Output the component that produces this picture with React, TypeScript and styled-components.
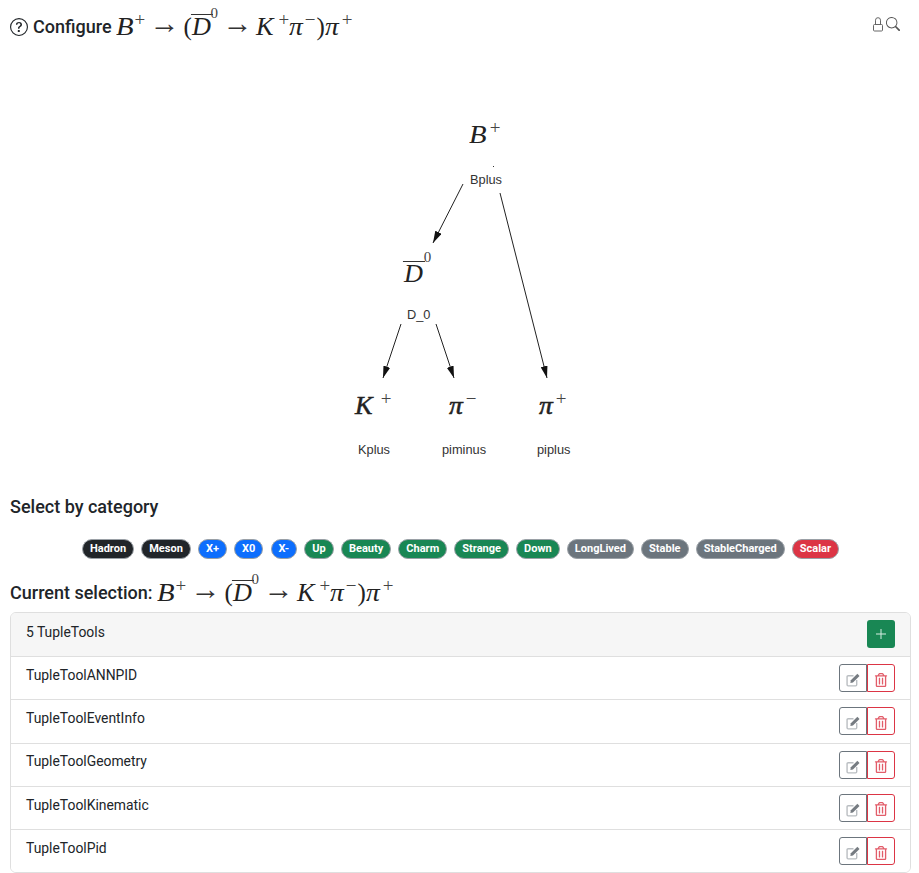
import React from 'react';
import styled, {createGlobalStyle} from 'styled-components';
import {BsQuestionCircle, BsSearch} from 'react-icons/bs';
import {FaRegTrashAlt} from 'react-icons/fa';

const GlobalStyle = createGlobalStyle`
	html, body {
		margin: 0;
		height: 873px;
		overflow: hidden;
		background: #fff;
		font-family: Roboto, "Liberation Sans", sans-serif;
		color: #212529;
	}
`;

const Page = styled.div`
	padding: 0 8px 0 10px;
`;

const TitleRow = styled.div`
	display: flex;
	justify-content: space-between;
	height: 50px;
	padding-right: 11px;
`;

const Heading = styled.h2`
	display: flex;
	align-items: center;
	gap: 6px;
	margin: 0;
	font-size: 18px;
	font-weight: 500;
	line-height: 24px;
	height: 24px;
`;

const TitleHeading = styled(Heading)`
	margin-top: 15px;
	svg {
		flex: none;
		margin-right: -1px;
	}
`;

const TopIcons = styled.div`
	display: flex;
	gap: 3px;
	padding-top: 17px;
	color: #555;
	align-items: flex-start;
`;

const MathText = styled.span`
	display: inline-flex;
	align-items: baseline;
	margin-left: -2px;
	font-family: "Liberation Serif", serif;
	font-size: 25px;
	font-weight: 400;
	line-height: 24px;
	color: #222;
`;

const Letter = styled.i<{$w: number; $sx?: number; $heavy?: boolean}>`
	display: inline-block;
	width: ${p => p.$w}px;
	transform: scaleX(${p => p.$sx ?? 1});
	transform-origin: left center;
	-webkit-text-stroke: ${p => (p.$heavy ? '0.5px #222' : '0')};
`;

const Overlined = styled(Letter)`
	position: relative;
	&::before {
		content: '';
		position: absolute;
		left: -1px;
		right: -1px;
		top: -1px;
		height: 1px;
		background: #333;
	}
`;

const Sup = styled.span<{$w: number}>`
	display: inline-block;
	width: ${p => p.$w}px;
	font-size: 19px;
	font-style: normal;
	font-weight: 300;
	text-align: center;
	position: relative;
	top: -9px;
	line-height: 0;
	color: #444;
`;

const Zero = styled(Sup)`
	font-size: 15px;
	top: -17px;
`;

const TreeZero = styled(Zero)`
	top: -20px;
`;

const Arrow = styled.span`
	display: inline-block;
	margin: 0 8px 0 9px;
	width: 21px;
	font-size: 30px;
	line-height: 0;
	color: #333;
	position: relative;
	top: -2px;
	left: -4px;
`;

const Paren = styled.span<{$gap?: number}>`
	display: inline-block;
	width: 8px;
	margin-left: ${p => p.$gap ?? 0}px;
`;

const Canvas = styled.div`
	position: relative;
	height: 435px;
	margin-left: -10px;
`;

const Edges = styled.svg`
	position: absolute;
	left: 0;
	top: 0;
`;

const Node = styled.div<{$x: number; $y: number}>`
	position: absolute;
	left: ${p => p.$x}px;
	top: ${p => p.$y}px;
`;

const NodeLabel = styled(Node)`
	font-family: "Liberation Sans", sans-serif;
	font-size: 12.8px;
	line-height: 16px;
	color: #333;
`;

const SectionHeading = styled(Heading)`
	margin-top: 10px;
`;

const BadgeRow = styled.div`
	display: flex;
	justify-content: center;
	gap: 7.15px;
	margin: 20px 0 22px;
`;

const Badge = styled.span<{$bg: string}>`
	display: inline-block;
	height: 20px;
	box-sizing: border-box;
	padding: 0 7px;
	border: 1px solid #9aa0a6;
	border-radius: 10px;
	background: ${p => p.$bg};
	color: #fff;
	font-size: 11px;
	font-weight: 700;
	line-height: 18px;
	white-space: nowrap;
`;

const List = styled.div`
	margin-top: 7px;
	border: 1px solid #dfdfdf;
	border-radius: 6px;
	overflow: hidden;
`;

const HeaderRow = styled.div`
	display: flex;
	justify-content: space-between;
	box-sizing: border-box;
	height: 43px;
	padding: 7px 15px;
	background: #f6f6f6;
	font-size: 13.9px;
	line-height: 21px;
`;

const HeaderText = styled.span`
	margin-top: 1.5px;
`;

const RowText = styled.span`
	margin-top: 0.7px;
`;

const Row = styled(HeaderRow)`
	height: 43.3px;
	background: #fff;
	border-top: 1px solid #dfdfdf;
`;

const Actions = styled.div`
	display: flex;
`;

const IconButton = styled.button<{$color: string; $side: 'left' | 'right'}>`
	display: flex;
	align-items: center;
	justify-content: center;
	width: 28px;
	height: 28px;
	padding: 3px 0 0;
	background: #fff;
	border: 1px solid ${p => p.$color};
	border-radius: ${p => (p.$side === 'left' ? '3px 0 0 3px' : '0 3px 3px 0')};
	color: ${p => p.$color};
	svg {
		opacity: 0.8;
	}
`;

const AddButton = styled.button`
	display: flex;
	align-items: center;
	justify-content: center;
	width: 28px;
	height: 28px;
	padding: 0;
	border: 0;
	border-radius: 3px;
	background: #198754;
`;

const Lock = () => (
	<svg width="10" height="15" viewBox="0 0 10 15" fill="none" stroke="#666" strokeWidth="1">
		<path d="M2.5 7.5V3.2a2.5 2.5 0 0 1 5 0V7.5" />
		<rect x="0.5" y="7.5" width="9" height="6.5" rx="1" />
	</svg>
);

const EditIcon = () => (
	<svg width="15" height="15" viewBox="0 0 14 14" fill="none">
		<path d="M10 7.5V12a1 1 0 0 1-1 1H2a1 1 0 0 1-1-1V4.5a1 1 0 0 1 1-1h5" stroke="#a9aeb3" strokeWidth="1.3" />
		<path d="M4.5 7.8L10.6 1.7l2 2L6.5 9.8l-2.4.4z" fill="#555c63" />
	</svg>
);

const Decay = () => (
	<MathText>
		<Letter $w={19} $sx={1.15}>B</Letter>
		<Sup $w={10}>+</Sup>
		<Arrow>→</Arrow>
		<Paren $gap={1}>(</Paren>
		<Overlined $w={19} $sx={1.05}>D</Overlined>
		<Zero $w={7}>0</Zero>
		<Arrow>→</Arrow>
		<Letter $w={23} $sx={1.05}>K</Letter>
		<Sup $w={10}>+</Sup>
		<Letter $w={15} $sx={1.1}>π</Letter>
		<Sup $w={13}>−</Sup>
		<Paren>)</Paren>
		<Letter $w={17} $sx={1.1}>π</Letter>
		<Sup $w={11}>+</Sup>
	</MathText>
);

const edges = [
	[463, 184, 433, 243],
	[500, 193, 547, 378],
	[401, 324, 383, 378],
	[436, 324, 454, 378],
];

const badges: [string, string][] = [
	['Hadron', '#212529'],
	['Meson', '#212529'],
	['X+', '#0d6efd'],
	['X0', '#0d6efd'],
	['X-', '#0d6efd'],
	['Up', '#198754'],
	['Beauty', '#198754'],
	['Charm', '#198754'],
	['Strange', '#198754'],
	['Down', '#198754'],
	['LongLived', '#6c757d'],
	['Stable', '#6c757d'],
	['StableCharged', '#6c757d'],
	['Scalar', '#dc3545'],
];

const tools = [
	'TupleToolANNPID',
	'TupleToolEventInfo',
	'TupleToolGeometry',
	'TupleToolKinematic',
	'TupleToolPid',
];

const App = () => (
	<Page>
		<GlobalStyle />
		<TitleRow>
			<TitleHeading>
				<BsQuestionCircle size={18} />
				<span>Configure</span>
				<Decay />
			</TitleHeading>
			<TopIcons>
				<Lock />
				<BsSearch size={14} />
			</TopIcons>
		</TitleRow>
		<Canvas>
			<Edges width="919" height="435" viewBox="0 50 919 435">
				<defs>
					<marker id="head" markerWidth="12" markerHeight="7" refX="12" refY="3.5" orient="auto" markerUnits="userSpaceOnUse">
						<path d="M0 0L12 3.5L0 7z" fill="#111" />
					</marker>
				</defs>
				{edges.map(([x1, y1, x2, y2]) => (
					<line key={`${x1}-${y1}-${x2}`} x1={x1} y1={y1} x2={x2} y2={y2} stroke="#222" strokeWidth="1" markerEnd="url(#head)" />
				))}
				<rect x="493" y="166" width="1" height="1" fill="#333" />
			</Edges>
			<Node $x={471} $y={73}>
				<MathText>
					<Letter $w={20} $sx={1.15}>B</Letter>
					<Sup $w={12}>+</Sup>
				</MathText>
			</Node>
			<NodeLabel $x={470} $y={122}>Bplus</NodeLabel>
			<Node $x={406} $y={212}>
				<MathText>
					<Overlined $w={19} $sx={1.05}>D</Overlined>
					<TreeZero $w={9}>0</TreeZero>
				</MathText>
			</Node>
			<NodeLabel $x={407} $y={257}>D_0</NodeLabel>
			<Node $x={357} $y={344}>
				<MathText>
					<Letter $w={25} $sx={1.05} $heavy>K</Letter>
					<Sup $w={12}>+</Sup>
				</MathText>
			</Node>
			<NodeLabel $x={358} $y={392}>Kplus</NodeLabel>
			<Node $x={451} $y={344}>
				<MathText>
					<Letter $w={16} $sx={1.1} $heavy>π</Letter>
					<Sup $w={12}>−</Sup>
				</MathText>
			</Node>
			<NodeLabel $x={442} $y={392}>piminus</NodeLabel>
			<Node $x={541} $y={344}>
				<MathText>
					<Letter $w={16} $sx={1.1} $heavy>π</Letter>
					<Sup $w={12}>+</Sup>
				</MathText>
			</Node>
			<NodeLabel $x={537} $y={392}>piplus</NodeLabel>
		</Canvas>
		<SectionHeading>Select by category</SectionHeading>
		<BadgeRow>
			{badges.map(([name, bg]) => (
				<Badge key={name} $bg={bg}>{name}</Badge>
			))}
		</BadgeRow>
		<Heading>
			<span>Current selection:</span>
			<Decay />
		</Heading>
		<List>
			<HeaderRow>
				<HeaderText>5 TupleTools</HeaderText>
				<AddButton>
					<svg width="12" height="12" viewBox="0 0 12 12" stroke="#d8eee2" strokeWidth="1">
						<path d="M6 1v10M1 6h10" />
					</svg>
				</AddButton>
			</HeaderRow>
			{tools.map(tool => (
				<Row key={tool}>
					<RowText>{tool}</RowText>
					<Actions>
						<IconButton $color="#6c757d" $side="left"><EditIcon /></IconButton>
						<IconButton $color="#dc3545" $side="right"><FaRegTrashAlt size={14} /></IconButton>
					</Actions>
				</Row>
			))}
		</List>
	</Page>
);

export default App;
